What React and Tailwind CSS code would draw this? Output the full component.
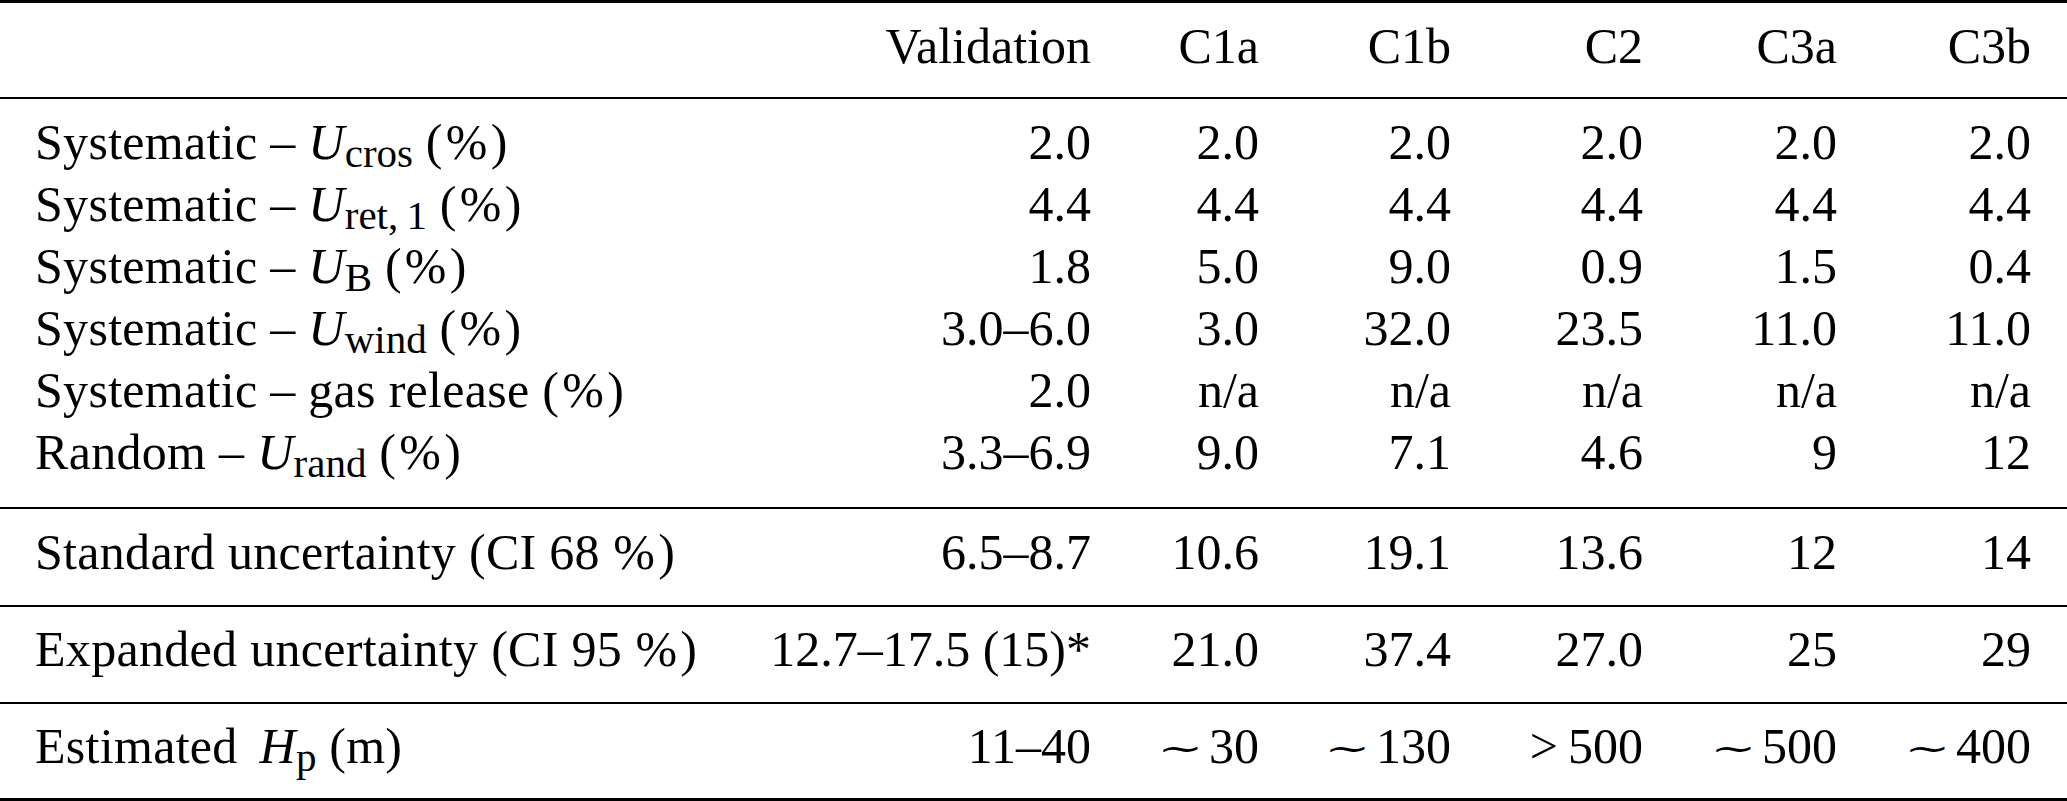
import React from "react";

const GRID =
  "grid grid-cols-[740px_351px_168px_192px_192px_194px_194px] pr-[36px] h-[62px] leading-[62px] whitespace-nowrap";

function Sb({ children }) {
  return <sub className="text-[41px] -bottom-[8px] tracking-normal">{children}</sub>;
}

function U({ s }) {
  return (
    <>
      <i>U</i>
      <Sb>{s}</Sb>
    </>
  );
}

function Pct() {
  return <span className="mx-[3px]">%</span>;
}

function Sim({ n }) {
  return (
    <>
      <span className="inline-block leading-none font-['DejaVu_Serif',serif] text-[42px] scale-x-[1.3] scale-y-[0.8] origin-right mr-[6px]">
        ∼
      </span>
      <span>{n}</span>
    </>
  );
}

function Row({ label, vals }) {
  return (
    <div className={GRID}>
      <div className="pl-[35px] text-left tracking-[0.3px]">{label}</div>
      {vals.map((v, i) => (
        <div key={i} className="text-right">
          {v}
        </div>
      ))}
    </div>
  );
}

function Rule({ h = "h-[2px]" }) {
  return <div className={`${h} bg-black w-full`} />;
}

export default function App() {
  const body = [
    [
      <>Systematic – <U s="cros" /> (<Pct />)</>,
      ["2.0", "2.0", "2.0", "2.0", "2.0", "2.0"],
    ],
    [
      <>Systematic – <U s={"ret,\u20091"} /> (<Pct />)</>,
      ["4.4", "4.4", "4.4", "4.4", "4.4", "4.4"],
    ],
    [
      <>Systematic – <U s="B" /> (<Pct />)</>,
      ["1.8", "5.0", "9.0", "0.9", "1.5", "0.4"],
    ],
    [
      <>Systematic – <U s="wind" /> (<Pct />)</>,
      ["3.0–6.0", "3.0", "32.0", "23.5", "11.0", "11.0"],
    ],
    [
      <>Systematic – gas release (<Pct />)</>,
      ["2.0", "n/a", "n/a", "n/a", "n/a", "n/a"],
    ],
    [
      <>Random – <U s="rand" /> (<Pct />)</>,
      ["3.3–6.9", "9.0", "7.1", "4.6", "9", "12"],
    ],
  ];

  return (
    <div className="w-[2067px] h-[801px] overflow-hidden bg-white text-black font-['Liberation_Serif','Times_New_Roman',serif] text-[50px]">
      <Rule h="h-[3px]" />
      <div className="pt-[12px] pb-[20px]">
        <Row label="" vals={["Validation", "C1a", "C1b", "C2", "C3a", "C3b"]} />
      </div>
      <Rule />
      <div className="pt-[12px] pb-[24px]">
        {body.map(([l, v], i) => (
          <Row key={i} label={l} vals={v} />
        ))}
      </div>
      <Rule />
      <div className="pt-[12px] pb-[22px]">
        <Row
          label={<>Standard uncertainty (CI 68{"\u2009"}<Pct />)</>}
          vals={["6.5–8.7", "10.6", "19.1", "13.6", "12", "14"]}
        />
      </div>
      <Rule />
      <div className="pt-[11px] pb-[22px]">
        <Row
          label={<>Expanded uncertainty (CI 95{"\u2009"}<Pct />)</>}
          vals={["12.7–17.5 (15)*", "21.0", "37.4", "27.0", "25", "29"]}
        />
      </div>
      <Rule />
      <div className="pt-[11px] pb-[21px]">
        <Row
          label={
            <>
              Estimated <i className="ml-[9px]">H</i>
              <Sb>p</Sb> (m)
            </>
          }
          vals={[
            "11–40",
            <Sim n="30" />,
            <Sim n="130" />,
            <>
              <span>&gt;</span>
              <span className="ml-[10px]">500</span>
            </>,
            <Sim n="500" />,
            <Sim n="400" />,
          ]}
        />
      </div>
      <Rule h="h-[3px]" />
    </div>
  );
}
